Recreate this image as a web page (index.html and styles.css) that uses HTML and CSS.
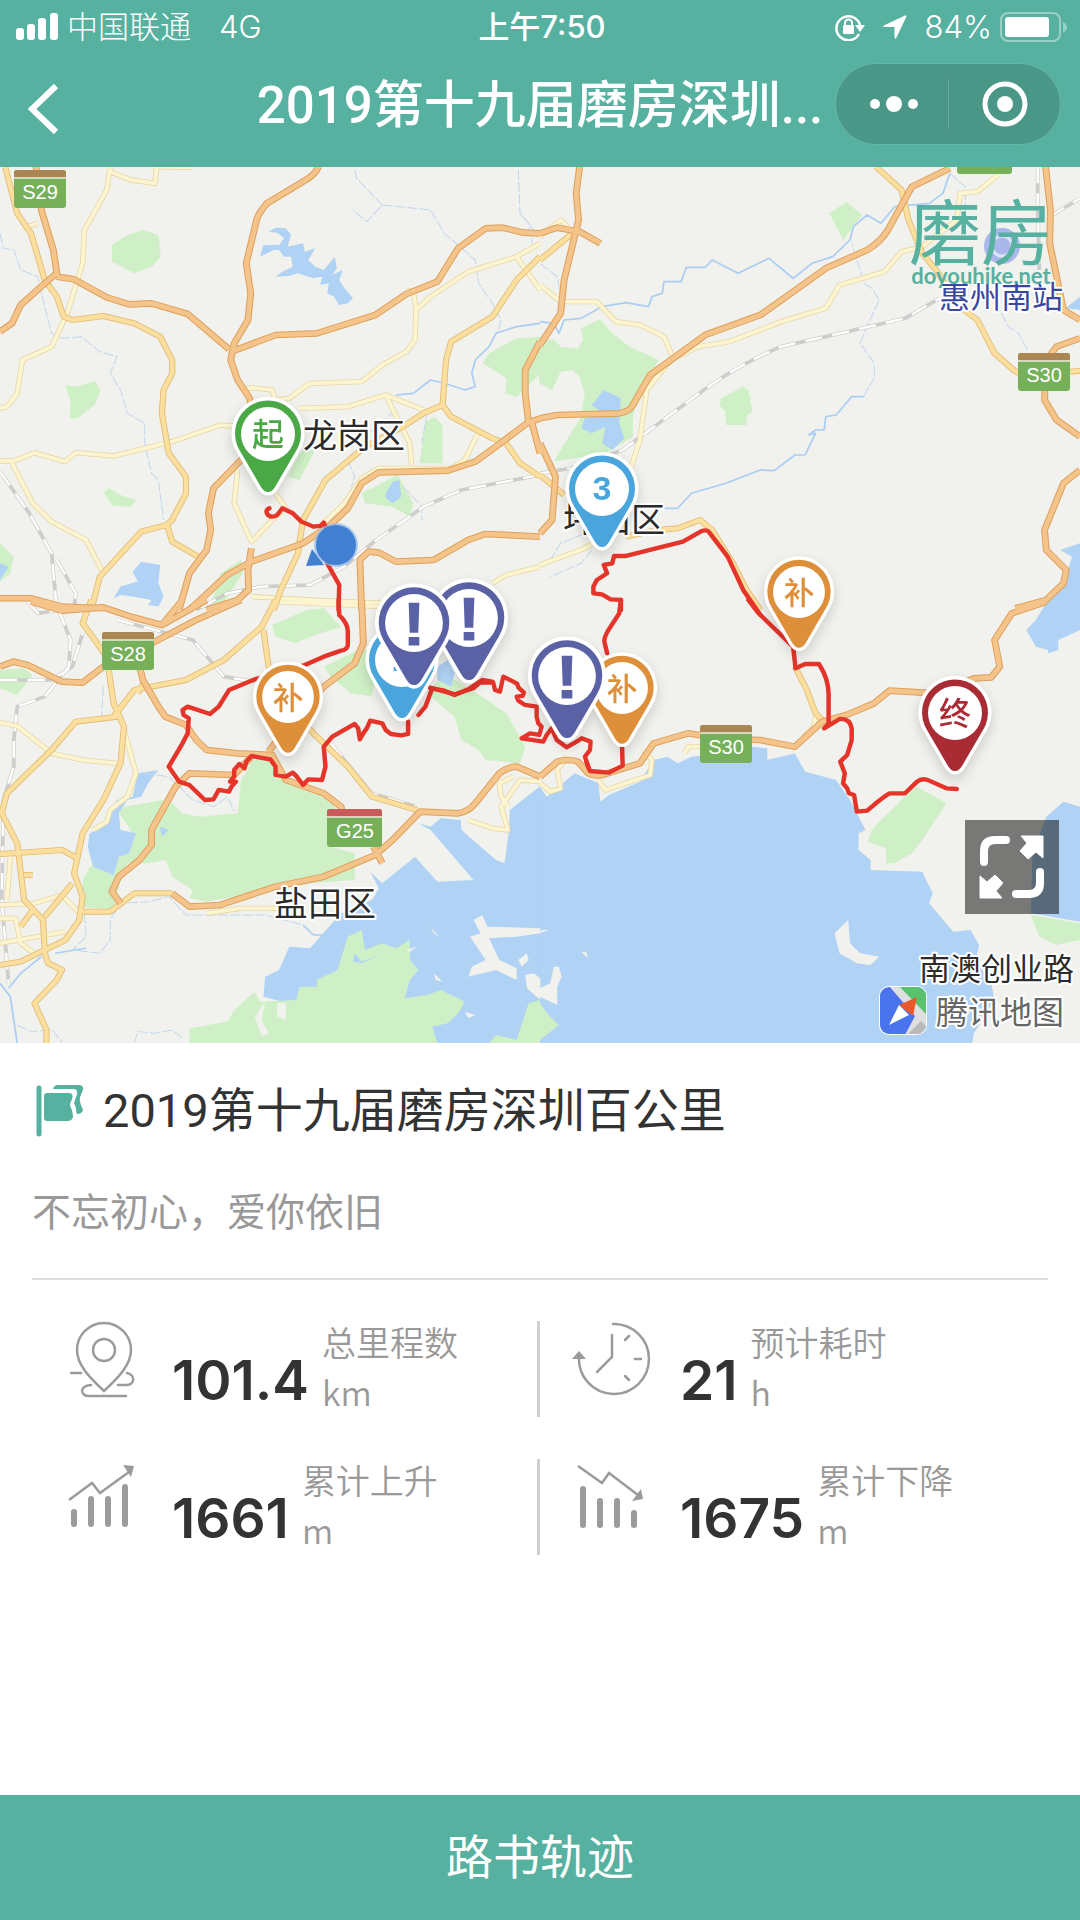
FILE: index.html
```html
<!DOCTYPE html>
<html lang="zh-CN">
<head>
<meta charset="utf-8">
<meta name="viewport" content="width=device-width, initial-scale=1">
<title>2019第十九届磨房深圳百公里</title>
<link rel="stylesheet" href="styles.css">
</head>
<body>
<header class="top">
  <div class="status">
    <div class="status-side">
      <svg class="signal" viewBox="0 0 42 28" aria-hidden="true"><rect x="0" y="15" width="8" height="12" rx="3"/><rect x="11" y="11" width="8" height="16" rx="3"/><rect x="22" y="5" width="8" height="22" rx="3"/><rect x="34" y="0" width="8" height="27" rx="3"/></svg>
      <span class="carrier">中国联通</span>
      <span class="network">4G</span>
    </div>
    <time class="clock">上午7:50</time>
    <div class="status-side status-right">
      <svg class="lock" viewBox="0 0 30 28" aria-hidden="true"><path d="M24 21A12 12 0 1 1 25 12" fill="none" stroke="#fff" stroke-width="2.5"/><path d="M20 12h10l-5 7z"/><rect x="8" y="12" width="11" height="9" rx="1"/><path d="M10 13v-3a3.500 3.500 0 0 1 7 0v3" fill="none" stroke="#fff" stroke-width="2"/></svg>
      <svg class="arrow" viewBox="0 0 26 26" aria-hidden="true"><path d="M24 1Q26 0 25 3L15 24Q13 27 13 23V13H3Q-1 13 3 11Z"/></svg>
      <span class="charge">84%</span>
      <svg class="battery" viewBox="0 0 68 30" aria-hidden="true"><rect x="1" y="1" width="59" height="28" rx="7" fill="none" stroke="#fff" stroke-opacity=".4" stroke-width="2"/><rect x="5" y="5" width="44" height="20" rx="3"/><path d="M63 10q8 5 0 11z" fill-opacity=".4"/></svg>
    </div>
  </div>
  <div class="nav">
    <button class="back" aria-label="返回"><svg viewBox="0 0 32 52" aria-hidden="true"><path d="M28 3L4 26L28 49" fill="none" stroke="#fff" stroke-width="6"/></svg></button>
    <h1 class="nav-title">2019第十九届磨房深圳...</h1>
    <div class="capsule">
      <button aria-label="更多"><svg viewBox="0 0 50 50" aria-hidden="true"><circle cx="8" cy="25" r="5"/><circle cx="27" cy="25" r="8"/><circle cx="46" cy="25" r="5"/></svg></button>
      <button aria-label="关闭"><svg viewBox="0 0 50 50" aria-hidden="true"><circle cx="25" cy="25" r="20" fill="none" stroke="#fff" stroke-width="5"/><circle cx="25" cy="25" r="8"/></svg></button>
    </div>
  </div>
</header>

<main class="page">
  <section class="map" aria-label="路线地图">
    <svg class="map-canvas" viewBox="0 0 1080 876">
      <defs>
        <g id="pale">
          <g transform="translate(0 -7) scale(.3444 .3333)"><path d="M320 20L310 90L245 210L240 310L195 460L150 560L65 600L50 700L20 740L0 745M320 35L380 60L450 70L455 25M440 20L560 22M0 903H40L100 878L190 905L220 878L330 888L500 845L640 795L700 800M35 910L95 1030L150 1085L250 1140L300 1240M700 690L730 683L790 690L800 720L840 715L900 670L1050 665L1110 615L1180 575L1205 540L1208 450L1250 410L1360 335L1500 290L1568 250M870 745L1010 740L1120 705L1230 750M1120 705L1160 790L1190 850L1195 915M1390 815L1350 900L1310 925H1100L1050 955L1000 1030L940 1090M690 930L680 1030L730 1145L800 1070L830 1045L800 1000M1500 290L1568 390M1180 390L1200 395L1208 450M730 1310L900 1320L1120 1330M1430 1270L1470 1245L1568 1220M65 205L110 190"/></g>
          <g transform="translate(540 -7) scale(.3444 .3333)"><path d="M0 375L60 425H165L220 485L290 495L360 530L385 590M0 230L60 180L80 200M265 920L290 840L310 690L380 600L460 560L550 545L700 485L830 445L870 375L1000 335L1050 275L1110 260L1210 180L1220 100L1270 95L1330 45M0 1215L130 1165L170 1140"/></g>
          <g transform="translate(0 433) scale(.3444 .3333)"><path d="M0 368L50 378L150 460L240 480L340 490M360 390L395 520L370 590L320 630L310 665L270 690M0 915L100 910L180 885L230 940M0 1030L190 995M0 955H45L60 1030L100 1060M30 770L20 900M600 940L700 925H830M800 5L1100 20M1360 660L1430 685L1475 690L1455 620L1510 540L1568 545M1490 530L1450 550L1455 590L1475 620"/></g>
          <g transform="translate(540 433) scale(.3444 .3333)"><path d="M0 550L30 575L60 565L50 510L80 470M170 540L190 570L320 525L325 480L300 450M420 460L430 440H470M800 350L795 380L765 410"/></g>
        </g>
        <g id="yellow">
          <g transform="translate(0 -7) scale(.3444 .3333)"><path d="M15 20L50 160L90 220L130 360L165 410L185 470L210 480L300 468L390 490L465 530L500 600V640L475 690L470 760L490 880L540 950V1000L500 1080L485 1095L410 1115L290 1250L265 1350M485 1095L500 1145L575 1190M1568 290L1500 360L1430 470L1310 545L1295 600L1285 735L1230 760L1170 800L1060 860L945 960L880 1080L865 1180L815 1290L795 1350M1285 735L1310 770L1430 835L1470 850L1510 910L1568 950"/></g>
          <g transform="translate(540 -7) scale(.3444 .3333)"><path d="M975 20L1050 90L1070 180L1110 280L1150 330L1220 440L1270 480L1320 580L1375 630L1390 640M1540 635L1568 632M0 945L70 1005M100 215L0 300M250 1130L340 1110L400 1105L465 1080L500 1110L560 1210L600 1290L640 1350"/></g>
          <g transform="translate(0 433) scale(.3444 .3333)"><path d="M265 0L240 70L310 170L330 310L360 380L350 490L300 600L240 700L215 820L240 890L230 960L190 1020L60 1085L0 1095M340 350L220 365L150 450L20 580L5 640L50 730L70 900L125 960L130 1060M330 350L390 270L540 240L650 180L760 80L800 0M765 90L780 200L850 330L910 400L1010 500L1080 590L1210 630M0 762L180 750L225 775M210 850L130 950M70 825H95M95 930L60 980M240 935H320L390 880H500M130 1060L140 1090L180 1110L165 1140L100 1210L135 1290V1330M420 245L400 280"/></g>
          <g transform="translate(540 433) scale(.3444 .3333)"><path d="M740 200L775 270L800 340L820 360"/></g>
        </g>
        <g id="highway">
          <g transform="translate(0 -7) scale(.3444 .3333)"><path d="M105 20L120 150L155 270L165 340L130 370L60 435L35 490L0 515M165 350L215 358L310 412L375 433L440 430L545 462L665 568M925 20Q915 45 880 65L775 130Q750 160 745 180L715 310L728 400L720 480L680 550L670 600L690 660L725 715L745 850L700 900L620 985L605 1060L612 1110L600 1170L550 1240L520 1350M680 572L800 525L920 520L1090 465L1180 402L1270 365L1330 265L1410 205L1460 203L1520 218L1568 220M1568 545L1525 630V700L1535 790M1568 775L1530 790L1440 860L1380 905L1300 932L1100 937L1050 970L1010 1045L960 1095L880 1150L730 1205L660 1245L550 1350M730 1165L720 1230L722 1290L690 1320L600 1350M1050 1350L1045 1200L1070 1175L1100 1178L1150 1205L1260 1200L1360 1140L1410 1122L1568 1130M0 1315L90 1315L180 1340L300 1345M1545 790L1568 880"/></g>
          <g transform="translate(540 -7) scale(.3444 .3333)"><path d="M115 20L105 100L112 180L70 360L60 460L0 555M0 220L50 203L115 215L175 250M0 775L50 765L230 760Q260 755 270 735L320 645L480 525L640 465L830 325L950 270Q990 245 1010 210L1080 80L1190 25M0 850L45 950L35 1080L0 1120M1468 20L1482 150L1480 250L1520 450L1568 480M1568 535L1500 560L1470 600L1465 720L1500 780L1568 830M1568 930L1520 970L1465 1110L1470 1170L1528 1230L1520 1270L1470 1320L1380 1345"/></g>
          <g transform="translate(0 433) scale(.3444 .3333)"><path d="M90 5L180 32L300 22L380 50L470 75L600 0M470 75L530 0M0 200L40 185L80 195L180 245L240 248L300 200L440 130L570 60L700 0M405 200L415 240L460 320L480 350L540 375L570 420L600 450L690 460L790 465L830 540L940 580L990 620L1000 660M350 910L325 875L345 830L405 780L440 735V690L510 560L550 520L680 525L730 470M1050 0L1055 130L1030 190L940 260L820 400L780 455M500 880L550 920L640 915L800 860L940 830L1090 765L1140 720L1220 635L1330 640Q1360 635 1380 610L1450 520Q1475 500 1500 500L1568 530M1085 740L1110 790"/></g>
          <g transform="translate(540 433) scale(.3444 .3333)"><path d="M0 530L50 485Q80 475 110 485L140 520Q155 530 180 525L290 490L330 430L430 400L520 415L640 420L740 440L820 365L890 345L970 310L1015 272L1150 280L1260 235L1310 232L1335 200L1320 120L1370 40L1470 5"/></g>
        </g>
        <g id="rail">
          <path transform="translate(0 -7) scale(.3444 .3333)" d="M1568 945L1340 990L1230 1040L1080 1150L1000 1220L900 1275L760 1280L660 1300L570 1350M0 935L85 1060L150 1180L165 1350M165 1200L220 1300L215 1350"/>
          <path transform="translate(540 -7) scale(.3444 .3333)" d="M0 940L90 925L240 870L430 725Q560 620 700 560L830 530L1060 475L1160 415M1445 20V130L1450 330M1480 170L1568 115"/>
          <path transform="translate(0 433) scale(.3444 .3333)" d="M170 30L205 120L200 200L130 290L50 320L40 420V500L10 600L5 900L25 1150M0 240H150L210 200L240 100M340 60L560 120L650 230L740 245M960 430L1080 580L1210 620M80 5L110 40L170 30"/>
        </g>
        <path id="pin" d="M0 58C-3 58-5 56-7 53L-28 17A33 33 0 1 1 28 17L7 53C5 56 3 58 0 58Z"/>
        <g id="shield"><rect width="52" height="38" rx="3" fill="#77b05a"/><path d="M0 8V3Q0 0 3 0H49Q52 0 52 3V8Z" fill="#a98652"/><path d="M0 8H52" stroke="#e9efdf" stroke-width="1.500"/></g>
      </defs>

      <rect width="1080" height="876" fill="#f1f2ed"/>

      <g class="water">
        <path transform="translate(0 -7) scale(.3444 .3333)" d="M780 215L800 203L830 205L845 225L835 260L880 250L885 275L915 265L895 300L915 320L940 330L972 290L978 325L965 345L995 330L985 360L1000 385L1025 415L1010 430L985 435L970 410L950 400L955 370L930 375L935 350L910 355L865 340L840 348L800 350L820 335L850 320L845 290L825 290L810 270L795 270L755 290L765 255L810 255L825 235L805 218ZM410 1205L465 1215L460 1270L475 1310L460 1340L430 1335L440 1320L385 1310L350 1305L330 1315L350 1280L400 1265L385 1235Z"/>
        <path transform="translate(540 -7) scale(.3444 .3333)" d="M1568 1150L1510 1170L1545 1190L1530 1240L1470 1330L1460 1360H1568ZM1525 445L1568 410V450Z"/>
        <path transform="translate(0 433) scale(.3444 .3333)" d="M1569 558L1480 630L1478 690L1465 790L1440 780L1340 690L1338 660L1280 655L1250 680L1215 670L1250 690L1375 840L1270 845L1205 770L1110 850L1075 815L1100 865L1080 900L990 940L930 1010L900 1045L840 1040L810 1110L770 1130L765 1190L820 1205L1000 1250L1200 1330H1569Z"/>
        <path transform="translate(540 433) scale(.3444 .3333)" d="M-1 560L20 590L60 555L100 520L170 550L175 605L200 585L290 545L330 480L370 470L400 490L440 470L520 460L620 440L660 445V480L740 460L770 515L860 540L900 600L945 690L925 700V750L960 780L960 810L1110 815L1140 880L1130 910L1200 995L1250 990L1275 1035L1265 1080L1310 1150L1320 1200L1260 1300L1255 1330H-1ZM1568 620L1520 605L1470 650L1430 760L1425 940L1568 965ZM1568 0H1475L1440 60L1412 90L1440 140L1475 150V160L1505 150V120L1568 90Z"/>
      </g>
      <g class="park">
        <path transform="translate(0 -7) scale(.3444 .3333)" d="M325 255L370 225L415 210L460 225L467 290L440 320L390 340L325 305ZM190 675L225 680L275 662L292 690L275 735L225 775L203 775L205 725ZM302 1000L315 985L350 1005L395 1020L380 1042L325 1035ZM1570 530L1500 535L1420 580L1402 610L1470 655L1468 700L1500 710L1570 640ZM1235 785L1260 770L1285 795V910H1218ZM1050 1000L1155 945L1200 1030L1190 1070L1140 1040L1060 1030ZM870 880L900 860L915 870L870 960L835 950ZM0 1150L40 1190L30 1240L0 1265ZM610 1345L640 1240L700 1200L705 1240L640 1345Z"/>
        <path transform="translate(540 -7) scale(.3444 .3333)" d="M-2 540L40 538L60 560L110 565L125 540L118 505L175 478L210 520L260 560L345 600L290 690L280 730L270 770L270 830L190 880L40 905L95 810L120 770L130 700L115 650L95 630L60 635L35 690L-2 670ZM840 160L890 125L935 165L880 240ZM525 715L590 680L605 690L618 755L600 765V795H540L538 755L520 735Z"/>
        <path transform="translate(0 433) scale(.3444 .3333)" d="M690 640L700 540L735 480H790L860 560L980 610L960 640V740L1030 760V840L900 850L600 905L550 895L560 870L530 850L500 830L480 780L430 790L370 790L350 840L330 930L240 920V840L260 800L350 760L380 690L345 640L360 620L420 610L470 600L500 610L530 640L580 650ZM790 75L890 30L940 25L990 80L900 110L860 130L800 110ZM940 200L1040 150H1100L1080 290L1020 280L960 230ZM1240 280L1290 220L1400 290L1470 340L1525 440L1510 490L1410 480L1390 450L1340 420L1320 350ZM0 210L70 205L95 225L50 285L0 265ZM550 1330V1285L660 1265L680 1230L740 1175L755 1205L860 1200L870 1160L920 1160V1140L980 1110L1010 1010L1050 990L1060 1050L1110 1030L1150 1045L1190 1020V1080L1215 1110L1190 1140L1175 1195L1240 1185L1280 1170L1350 1205L1330 1240L1300 1270L1255 1280L1270 1330ZM1568 1330H1420L1440 1305L1500 1320L1535 1210L1568 1200Z"/>
        <path transform="translate(540 433) scale(.3444 .3333)" d="M0 1210L25 1245L55 1275L0 1320ZM1095 560L1180 610L1110 720L1080 760L1030 790H1005V745L950 725L970 680L1060 590ZM1425 945L1568 970V1020L1500 1035L1450 1010Z"/>
      </g>
      <g class="water">
        <path transform="translate(0 -7) scale(.3444 .3333)" d="M1120 1000L1140 965L1160 960L1165 1010L1140 1030L1120 1015ZM0 1210L25 1220L0 1260Z"/>
        <path transform="translate(540 -7) scale(.3444 .3333)" d="M150 735L185 690L235 715L230 790L245 835L210 870L180 850L190 800L150 820L120 805L130 775L190 765Z"/>
        <path transform="translate(0 433) scale(.3444 .3333)" d="M400 520L460 510L430 550L410 590L370 600L345 640L350 690L395 700L375 760L345 770L330 825L270 800L255 740L260 700L300 680L340 600L385 590ZM1270 200L1300 180L1320 220L1310 260L1270 240ZM465 680L490 690L470 710ZM1030 1060L1050 1085L1110 1060L1050 1090L1025 1085Z"/>
      </g>
      <g fill="#f1f2ed">
        <path transform="translate(0 433) scale(.3444 .3333)" d="M1375 960L1400 945L1415 980L1569 985V1000L1500 1010L1420 1015L1450 1080L1500 1105V1140L1440 1110L1360 1130L1370 1100L1410 1080L1365 1010L1395 1000ZM1525 1125L1550 1120L1569 1135V1200L1530 1165ZM1505 1080L1530 1060L1535 1080L1515 1100ZM1250 980L1275 1010L1260 1000ZM1180 1050L1210 1040L1190 1055ZM1260 1120L1285 1145L1265 1140ZM740 1250L770 1205L760 1260L780 1300L760 1310ZM805 1210L830 1210V1260L805 1250ZM1350 1235L1380 1245L1360 1255Z"/>
        <path transform="translate(540 433) scale(.3444 .3333)" d="M855 1000L895 960L900 1030L930 1060L985 1070L960 1095L920 1090L870 1060ZM0 1165L30 1150L40 1100H55L63 1130L50 1160V1215L0 1190ZM120 1055L135 1055L138 1075ZM0 1000L25 990L5 990Z"/>
      </g>
      <g class="river">
        <path transform="translate(0 -7) scale(.3444 .3333)" d="M1568 490L1500 500L1440 520L1420 560L1380 600L1370 640L1380 680L1350 690L1290 670L1250 660L1200 700L1150 705"/>
        <path transform="translate(540 -7) scale(.3444 .3333)" d="M0 485L40 490L55 520L70 480L120 475L180 440L250 428L315 440L325 410L355 400L360 365L410 365L425 322L480 322L500 300L575 340L665 295L735 355L790 310L850 290L900 240L910 200L950 165L990 190L1030 140L1130 130L1170 100L1190 40M360 1045H400L440 1000L540 970L640 930L680 932L740 885L770 885L800 820L780 825L800 810H825L830 770L860 765L905 710L940 710"/>
        <path transform="translate(0 433) scale(.3444 .3333)" d="M0 1150L30 1190L50 1330M160 1060L250 1045M25 1165L60 1120L120 1070M880 975L910 1005H950"/>
      </g>
      <g class="stream">
        <path transform="translate(0 -7) scale(.3444 .3333)" d="M1505 30L1510 160L1535 190L1545 250M1510 160L1550 210M1030 30L1035 55L1110 135L1065 185L1025 150M1110 135L1250 150L1290 220L1380 300L1390 370L1430 430L1455 480L1445 520M0 220L10 265L40 270L60 330L110 350L125 420L150 520L180 535L235 530L290 575L340 590L320 640L350 690L370 760L420 790V850L440 940L460 960L475 1080M1240 760L1225 850M1150 750L1060 830M1010 900L1030 950L1020 980M1170 980L1225 1040V1080"/>
        <path transform="translate(540 -7) scale(.3444 .3333)" d="M940 710L972 650L970 610L930 550L945 510L985 420L960 380L945 375L920 300L905 250M1190 40L1235 80V170M1340 460L1360 500L1390 520L1415 570M0 310L50 350L65 440M130 1120L60 1150L30 1200M150 1170L120 1210L30 1250"/>
        <path transform="translate(0 433) scale(.3444 .3333)" d="M420 520L490 530L560 600L620 620L660 590L680 635M245 940L250 1010L210 1050L290 1060L320 1020V960L350 910L430 905L490 890L540 945L770 945L880 975M390 1330L400 1295L450 1300L500 1290L530 1315M50 1275L90 1295L150 1290L180 1325M300 260L295 350"/>
      </g>

      <use href="#rail" class="rail-case"/><use href="#rail" class="rail-core"/>
      <use href="#pale" class="pale-case"/><use href="#pale" class="pale-core"/>
      <use href="#yellow" class="yellow-case"/><use href="#yellow" class="yellow-core"/>
      <use href="#highway" class="highway-case"/><use href="#highway" class="highway-core"/>

      <g class="route">
        <path transform="translate(0 -7) scale(.3444 .3333)" d="M782 1045Q768 1052 778 1065Q790 1075 805 1065L820 1045L850 1060L875 1085L910 1100L930 1098L940 1088L950 1110L950 1210L985 1275L983 1350"/>
        <path transform="translate(0 433) scale(.3444 .3333)" d="M983 0L985 45Q1010 70 1010 95V135Q1008 150 990 152L940 170L885 195L740 238L665 270L635 320L610 342L545 320L530 330L533 345L548 355L545 400L530 430L490 500L520 545L550 555L595 600L620 598L635 570L665 575L672 560L685 545L668 545L680 530V510L695 492L710 505L715 485L730 468L785 478L800 500V525L830 530L850 518L862 530L880 555L895 538L935 540L945 500L940 440L965 410L1030 372L1040 385L1045 418L1055 400L1065 385L1075 362L1110 370L1120 390L1135 402L1165 406L1185 402V365M1215 345L1235 320L1255 265L1290 272L1320 285L1360 268L1400 240L1430 245"/>
        <path transform="translate(200 223) scale(.3333)" d="M690 893L765 913L820 895L840 878L880 878L885 900L900 905L910 860L940 875L952 882L955 892L972 908L968 918L950 920L955 932L975 945L1010 950V980L1015 1000L1025 1010L1018 1035L990 1030L965 1045L1030 1055L1040 1035L1055 1015L1070 1050L1100 1072L1130 1055L1145 1045L1172 1055L1170 1080L1155 1100L1165 1132"/>
        <path transform="translate(540 433) scale(.3444 .3333)" d="M135 485L145 513L200 518L240 497L238 430M235 0L230 40L205 80Q182 115 188 130L195 160M605 0L635 40L670 75L735 140L742 205L770 192H810Q840 240 838 290V370L825 385L870 357Q900 355 905 385V420L892 465L872 485L885 520L880 550L892 565L897 580L912 585L920 635L950 632L975 610L1000 590L1015 580H1060L1095 545Q1110 532 1130 542L1180 565L1210 567"/>
        <path transform="translate(540 -7) scale(.3444 .3333)" d="M235 1350V1320L205 1318L180 1303L155 1300V1280L165 1260L195 1240L185 1215L210 1210L215 1188L250 1188L415 1145L470 1113Q485 1108 492 1118L545 1190L590 1290L640 1365"/>
      </g>

      <g class="road-no">
        <use href="#shield" x="14" y="3"/><text x="40" y="32">S29</text>
        <use href="#shield" x="1018" y="186"/><text x="1044" y="215">S30</text>
        <use href="#shield" x="700" y="558"/><text x="726" y="587">S30</text>
        <use href="#shield" x="102" y="465"/><text x="128" y="494">S28</text>
        <rect x="327" y="642" width="55" height="38" rx="3" fill="#77b05a"/><path d="M327 650V645Q327 642 330 642H379Q382 642 382 645V650Z" fill="#c95b5b"/><path d="M327 650H382" stroke="#e9efdf" stroke-width="1.500"/><text x="355" y="671">G25</text>
        <path d="M957 0H1012V4Q1012 7 1009 7H960Q957 7 957 4Z" fill="#77b05a"/>
      </g>

      <g class="places">
        <text x="303" y="281">龙岗区</text>
        <text x="563" y="365">坪山区</text>
        <text x="274" y="749">盐田区</text>
        <text class="road-name" x="919" y="813">南澳创业路</text>
      </g>

      <text class="station" x="939" y="141">惠州南站</text>
      <circle cx="1002" cy="79" r="18" fill="#a9b7ea"/><circle cx="1002" cy="79" r="10" fill="none" stroke="#dde3f8" stroke-width="3"/>
      <text class="brand" x="909" y="92">磨房</text>
      <text class="brand-url" x="981" y="117">doyouhike.net</text>

      <g transform="translate(336 378)"><path d="M-30 21L-24 4L-12 20Z" fill="#417fd1"/><circle r="22" fill="#8db6ec" opacity=".7"/><circle r="20" fill="#417fd1"/></g>

      <g class="pins">
        <g transform="translate(268 267)"><use href="#pin" fill="#4aa847"/><circle r="27"/><text y="12" fill="#4aa847">起</text></g>
        <g transform="translate(602 322)"><use href="#pin" fill="#49a5dc"/><circle r="27"/><text class="num" y="11" fill="#49a5dc">3</text></g>
        <g transform="translate(288 530) scale(.96)"><use href="#pin" fill="#dd8f3a"/><circle r="27"/><text y="12" fill="#dd8f3a">补</text></g>
        <g transform="translate(622 521) scale(.96)"><use href="#pin" fill="#dd8f3a"/><circle r="27"/><text y="12" fill="#dd8f3a">补</text></g>
        <g transform="translate(799 425) scale(.96)"><use href="#pin" fill="#dd8f3a"/><circle r="27"/><text y="12" fill="#dd8f3a">补</text></g>
        <g transform="translate(955 546)"><use href="#pin" fill="#a92c35"/><circle r="27"/><text y="12" fill="#a92c35">终</text></g>
        <g transform="translate(402 493)"><use href="#pin" fill="#49a5dc"/><circle r="27"/><text class="num" y="11" fill="#49a5dc">2</text></g>
        <g transform="translate(469 451) scale(1.070)"><use href="#pin" fill="#5a61a4"/><circle r="27"/><path d="M-5-19H5L4 9H-4ZM-5 13H5V21H-5Z" fill="#5a61a4"/></g>
        <g transform="translate(414 456) scale(1.070)"><use href="#pin" fill="#5a61a4"/><circle r="27"/><path d="M-5-19H5L4 9H-4ZM-5 13H5V21H-5Z" fill="#5a61a4"/></g>
        <g transform="translate(567 509) scale(1.070)"><use href="#pin" fill="#5a61a4"/><circle r="27"/><path d="M-5-19H5L4 9H-4ZM-5 13H5V21H-5Z" fill="#5a61a4"/></g>
      </g>

      <g transform="translate(879 819)">
        <clipPath id="tile"><rect x="1" y="1" width="46" height="47" rx="9"/></clipPath>
        <rect width="48" height="49" rx="10" fill="#fff"/>
        <g clip-path="url(#tile)"><rect width="48" height="49" fill="#4a73ee"/><path d="M10 0H26L48 24V49H26L36 30Z" fill="#dedfe0"/><path d="M20 0H48V29Z" fill="#59c26e"/><path d="M28 49L42 35L48 41V49Z" fill="#b9b9b9"/></g>
        <path d="M38 11L34 30L20 19Z" fill="#e9592c"/><path d="M10 39L20 19L30 29Z" fill="#fff"/>
      </g>
      <text class="provider" x="936" y="857">腾讯地图</text>
    </svg>
    <button class="expand" aria-label="全屏地图"><svg viewBox="0 0 94 94" aria-hidden="true"><path d="M19 42V31Q19 20 30 20H41M75 52V63Q75 74 64 74H51" fill="none" stroke="#fff" stroke-width="8" stroke-linecap="round"/><path d="M56 16H78V38L71 32L63 39L55 31L62 23ZM37 78H15V56L22 62L30 55L38 63L31 71Z" stroke="#fff" stroke-width="1"/></svg></button>
  </section>

  <section class="info">
    <div class="heading">
      <svg class="flag" viewBox="0 0 48 52" aria-hidden="true"><path d="M3 3V49" stroke="#57b1a1" stroke-width="5" stroke-linecap="round"/><path d="M11 8H33Q38 8 36 14L34 19Q34 22 36 25L37 31Q37 36 31 36H11Q8 36 8 33V11Q8 8 11 8ZM17 4Q18 0 22 0H44Q48 1 47 5L44 12Q43 16 45 20L47 25Q46 29 41 29Q40 27 40 23L38 18L41 9Q42 4 37 4Z" fill="#57b1a1"/></svg>
      <h2>2019第十九届磨房深圳百公里</h2>
    </div>
    <p class="motto">不忘初心，爱你依旧</p>
  </section>

  <section class="stats">
    <div class="stat">
      <svg viewBox="0 0 76 78" class="stat-icon" aria-hidden="true"><g fill="none" stroke="#9b9b9b" stroke-width="2.500" stroke-linecap="round"><path d="M40 70C26 57 13 44 13 29A27 27 0 0 1 67 29C67 44 54 57 40 70Z"/><circle cx="40" cy="29" r="11"/><path d="M7 52H17M63 52C72 54 71 64 62 64H54M27 64C15 65 16 75 25 75H62"/></g></svg>
      <strong class="value">101.4</strong>
      <div class="meta"><span>总里程数</span><span>km</span></div>
    </div>
    <div class="stat">
      <svg viewBox="0 0 76 78" class="stat-icon" aria-hidden="true"><g fill="none" stroke="#9b9b9b" stroke-width="2.500" stroke-linecap="round"><path d="M41 3A35 35 0 1 1 7 36M40 14V36L25 51"/><path d="M53 19L57 15M63 38H69M53 55L57 59"/></g><path d="M0 38L7 30L14 38Z" fill="#9b9b9b"/></svg>
      <strong class="value">21</strong>
      <div class="meta"><span>预计耗时</span><span>h</span></div>
    </div>
    <div class="stat">
      <svg viewBox="0 0 76 78" class="stat-icon" aria-hidden="true"><path d="M10 53V65M27 40V65M44 40V65M61 28V65" stroke="#9b9b9b" stroke-width="6" stroke-linecap="round"/><path d="M5 41L28 24L36 34L65 13" fill="none" stroke="#9b9b9b" stroke-width="2.500"/><path d="M59 6L70 7L67 18Z" fill="#9b9b9b"/></svg>
      <strong class="value">1661</strong>
      <div class="meta"><span>累计上升</span><span>m</span></div>
    </div>
    <div class="stat">
      <svg viewBox="0 0 76 78" class="stat-icon" aria-hidden="true"><path d="M11 30V66M28 42V66M45 42V66M62 54V66" stroke="#9b9b9b" stroke-width="6" stroke-linecap="round"/><path d="M6 7L30 24L37 14L66 36" fill="none" stroke="#9b9b9b" stroke-width="2.500"/><path d="M69 30L71 40L60 42Z" fill="#9b9b9b"/></svg>
      <strong class="value">1675</strong>
      <div class="meta"><span>累计下降</span><span>m</span></div>
    </div>
  </section>
</main>

<button class="track">路书轨迹</button>
</body>
</html>
```
FILE: styles.css
```css
* { box-sizing: border-box; }

body {
  margin: 0;
  min-height: 100vh;
  display: flex;
  flex-direction: column;
  background: #fff;
  color: #333;
  font-family: Roboto, "Noto Sans CJK SC", sans-serif;
}

button {
  border: 0;
  padding: 0;
  background: none;
  color: inherit;
  font-family: inherit;
}

svg { display: block; }

/* Header */
.top {
  height: 167px;
  background: #57b1a1;
  color: #fff;
}

.top svg { fill: #fff; }

.status {
  height: 54px;
  padding: 0 12px 0 16px;
  display: grid;
  grid-template-columns: 1fr auto 1fr;
  align-items: center;
  font-family: Inter, "Noto Sans CJK SC", sans-serif;
  font-size: 31px;
  line-height: 40px;
  font-weight: 300;
}

.status-side { display: flex; align-items: center; }
.status-right { justify-content: flex-end; }
.signal { width: 42px; height: 28px; }
.carrier { margin-left: 9px; }
.network { margin-left: 28px; }
.clock { font-weight: 500; }
.lock { width: 30px; height: 28px; }
.arrow { width: 25px; height: 26px; margin-left: 17px; }
.charge { margin-left: 18px; }
.battery { width: 68px; height: 30px; margin-left: 8px; }

.nav {
  height: 100px;
  padding: 0 19px;
  display: grid;
  grid-template-columns: 1fr auto 1fr;
  align-items: center;
}

.back { width: 48px; height: 64px; justify-self: start; margin: 10px 0 0 9px; }
.back svg { width: 32px; height: 52px; }

.nav-title {
  margin: 4px 0 0;
  font-size: 51px;
  line-height: 64px;
  font-weight: 500;
  white-space: nowrap;
}

.capsule {
  width: 226px;
  height: 82px;
  justify-self: end;
  display: grid;
  grid-template-columns: 1fr 1fr;
  align-items: center;
  border: 1px solid #66b7a9;
  border-radius: 41px;
  background: #4a9687;
}

.capsule button {
  height: 50px;
  display: flex;
  align-items: center;
  justify-content: center;
}

.capsule button + button { border-left: 1px solid #66aa9d; }
.capsule svg { width: 50px; height: 50px; overflow: visible; }

/* Map */
.page { flex: 1; }
.map { position: relative; }
.map-canvas { width: 100%; height: auto; }
.water { fill: #b0d2f5; }
.park { fill: #cff0c6; }

.river, .stream { fill: none; stroke: #abcdf3; stroke-width: 5px; stroke-linejoin: round; }
.stream { stroke: #c3d6ee; stroke-width: 3px; stroke-dasharray: 30 6; }

.rail-case, .rail-core, .pale-case, .pale-core,
.yellow-case, .yellow-core, .highway-case, .highway-core {
  fill: none;
  stroke-linejoin: round;
}

.rail-case { stroke: #cdcdcd; stroke-width: 11px; }
.rail-core { stroke: #fff; stroke-width: 7px; stroke-dasharray: 50 30; }
.pale-case { stroke: #e6d8a8; stroke-width: 16px; }
.pale-core { stroke: #fdf5d2; stroke-width: 11px; }
.yellow-case { stroke: #e2ba76; stroke-width: 18px; }
.yellow-core { stroke: #fbdf9f; stroke-width: 13px; }
.highway-case { stroke: #dea05c; stroke-width: 20px; }
.highway-core { stroke: #f4c48b; stroke-width: 14px; }

.route {
  fill: none;
  stroke: #e5342a;
  stroke-width: 13px;
  stroke-linecap: round;
  stroke-linejoin: round;
}

.road-no text {
  fill: #fff;
  font: 20px "Liberation Sans", sans-serif;
  text-anchor: middle;
}

.places text, .station, .provider {
  font-family: "Noto Sans CJK SC", sans-serif;
  font-size: 34px;
  fill: #2b2b2b;
  stroke: #fff;
  stroke-width: 4px;
  stroke-linejoin: round;
  paint-order: stroke;
}

.places .road-name, .station { font-size: 31px; }
.station { fill: #39479f; }
.provider { font-size: 32px; fill: #666; }
.brand { font: 400 72px "Noto Sans CJK SC", sans-serif; fill: #57b1a1; }
.brand-url { font: 700 22px Lato, sans-serif; fill: #57b1a1; text-anchor: middle; }

.pins { filter: drop-shadow(0 5px 6px rgba(0, 0, 0, .15)); }
.pins use { stroke: #fff; stroke-width: 7px; paint-order: stroke; }
.pins circle { fill: #fff; }
.pins text { font: 500 32px "Noto Sans CJK SC", sans-serif; text-anchor: middle; }
.pins .num { font: 700 34px "Liberation Sans", sans-serif; }

.expand {
  position: absolute;
  right: 21px;
  bottom: 129px;
  width: 94px;
  height: 94px;
  background: rgba(0, 0, 0, .5);
}

.expand svg { fill: #fff; }

/* Route summary */
.info {
  margin: 0 32px;
  padding: 36px 0 39px;
  border-bottom: 2px solid #ddd;
}

.heading { display: flex; align-items: center; gap: 19px; }
.flag { width: 48px; height: 52px; margin-left: 4px; }
.heading h2 { margin: 0; font-size: 47px; line-height: 64px; font-weight: 400; }
.motto { margin: 44px 0 0; font-size: 39px; line-height: 52px; color: #999; }

.stats {
  padding: 41px 32px;
  display: grid;
  grid-template-columns: 1fr 1fr;
  row-gap: 42px;
}

.stat {
  height: 96px;
  padding-left: 32px;
  display: flex;
}

.stat:nth-child(odd) { border-right: 3px solid #d0d0d0; }

.stat-icon { width: 76px; height: 78px; overflow: visible; }

.value {
  margin: 27px 0 0 32px;
  font-family: Inter, sans-serif;
  font-size: 55px;
  line-height: 64px;
  font-weight: 600;
}

.meta {
  margin-left: 13px;
  display: grid;
  align-content: start;
  gap: 8px;
  font-size: 34px;
  line-height: 42px;
  font-weight: 350;
  font-family: "Noto Sans CJK SC", sans-serif;
  color: #999;
}

.track {
  height: 125px;
  background: #57b1a1;
  color: #fff;
  font-size: 47px;
  line-height: 64px;
}
```
